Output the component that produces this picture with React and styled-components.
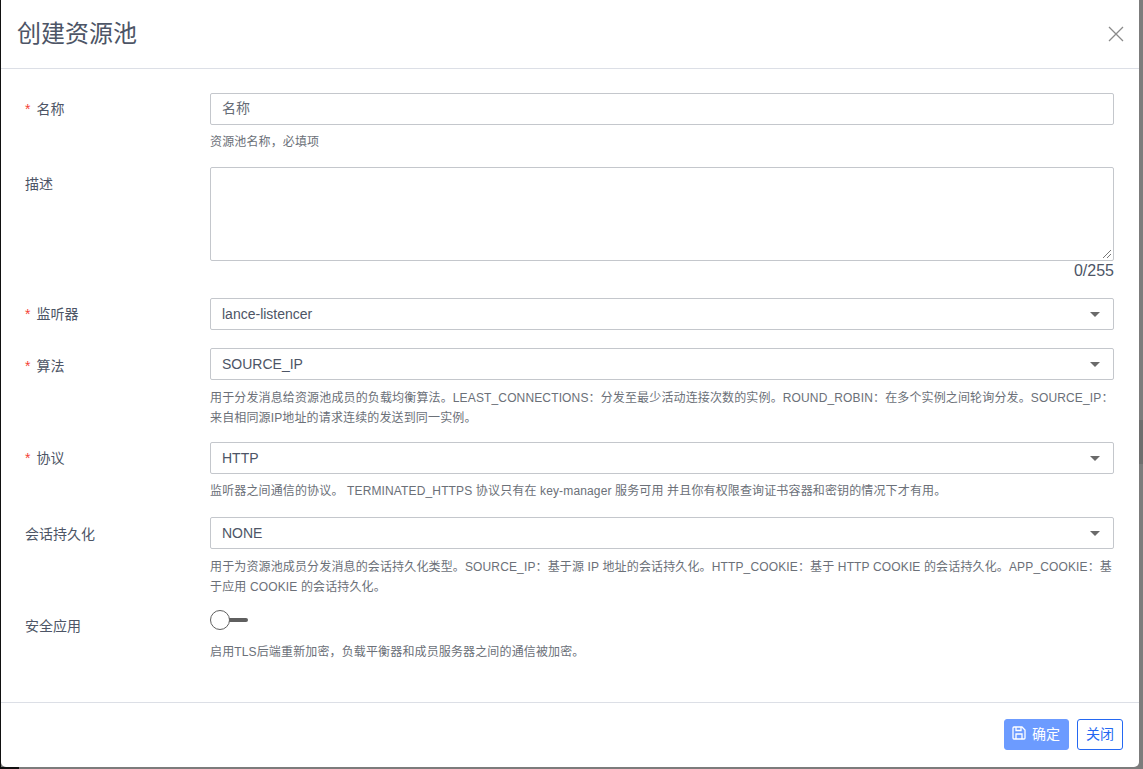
import React from "react";
import styled, { createGlobalStyle } from "styled-components";

const GlobalStyle = createGlobalStyle`
  html, body {
    margin: 0;
    padding: 0;
    height: 100%;
    background: #7a7a7a;
  }
  body {
    font-family: "Liberation Sans", "Noto Sans CJK SC", sans-serif;
    overflow: hidden;
  }
`;

const Backdrop = styled.div`
  width: 1143px;
  height: 769px;
  box-sizing: border-box;
  background:
    linear-gradient(#111, #111) left top / 1px 100% no-repeat,
    linear-gradient(#111, #111) left bottom / 19px 2px no-repeat,
    linear-gradient(#6e6e6e, #6e6e6e) right 420px / 4px 44px no-repeat,
    #7c7c7c;
`;

const Modal = styled.div`
  width: 1138px;
  height: 767px;
  box-sizing: border-box;
  margin-left: 1px;
  background: #fff;
  border-radius: 0 0 5px 5px;
  display: flex;
  flex-direction: column;
`;

const Header = styled.div`
  height: 69px;
  flex: none;
  box-sizing: border-box;
  border-bottom: 1px solid #dcdfe6;
  display: flex;
  align-items: center;
  justify-content: space-between;
  padding: 0 15px 0 16px;
`;

const Title = styled.h4`
  margin: 0 0 6px;
  font-size: 24px;
  font-weight: 400;
  color: #4d5566;
`;

const CloseIcon = styled.button`
  border: none;
  background: none;
  padding: 0;
  display: flex;
  color: #8a8a8a;
`;

const Body = styled.div`
  flex: 1;
  padding: 24px 25px 0 24px;
`;

const Row = styled.div`
  display: grid;
  grid-template-columns: 185px 904px;
  margin-bottom: ${(p) => p.$gap}px;
`;

const Label = styled.label`
  font-size: 14px;
  line-height: 32px;
  padding-top: ${(p) => p.$nudge || 0}px;
  color: #4d5566;
`;

const Star = styled.span`
  color: #f44336;
  margin-right: 6px;
`;

const Control = styled.div`
  min-width: 0;
`;

const Input = styled.div`
  height: 32px;
  box-sizing: border-box;
  border: 1px solid #c4c7cc;
  border-radius: 2px;
  padding: 0 11px;
  font-size: 14px;
  line-height: 29px;
  color: ${(p) => (p.$placeholder ? "#666b75" : "#4d5566")};
`;

const Area = styled.div`
  height: 94px;
  box-sizing: border-box;
  border: 1px solid #c4c7cc;
  border-radius: 2px;
  position: relative;
`;

const Grip = styled.svg`
  position: absolute;
  right: 1px;
  bottom: 1px;
`;

const Counter = styled.div`
  text-align: right;
  font-size: 16px;
  line-height: 20px;
  color: #4d5566;
`;

const Select = styled(Input)`
  display: flex;
  align-items: center;
  justify-content: space-between;
  padding-right: 13px;
  line-height: normal;
`;

const Caret = styled.span`
  width: 0;
  height: 0;
  border-left: 5.5px solid transparent;
  border-right: 5.5px solid transparent;
  border-top: 5.5px solid #6a6a6a;
`;

const Help = styled.div`
  margin-top: ${(p) => p.$top || 7}px;
  font-size: 12px;
  line-height: 20px;
  letter-spacing: 0.14px;
  color: #6b7078;
`;

const Switch = styled.div`
  width: 38px;
  height: 20px;
  position: relative;
  display: flex;
  align-items: center;
`;

const SwitchTrack = styled.span`
  width: 36px;
  height: 4px;
  margin-left: 2px;
  border-radius: 2px;
  background: #5f5f5f;
`;

const SwitchKnob = styled.span`
  position: absolute;
  left: 0;
  top: 0;
  width: 20px;
  height: 20px;
  box-sizing: border-box;
  border: 1px solid #5f5f5f;
  border-radius: 50%;
  background: #fff;
`;

const Footer = styled.div`
  height: 65px;
  flex: none;
  box-sizing: border-box;
  border-top: 1px solid #dcdfe6;
  display: flex;
  justify-content: flex-end;
  align-items: flex-start;
  gap: 8px;
  padding: 16px 16px 0 0;
`;

const Button = styled.button`
  height: 31px;
  box-sizing: border-box;
  border-radius: 3px;
  font-family: inherit;
  font-size: 14px;
  display: flex;
  align-items: center;
  gap: 6px;
  padding: 0 8px 3px ${(p) => (p.$primary ? 7 : 8)}px;
  border: 1px solid ${(p) => (p.$primary ? "#6c9bff" : "#2468f2")};
  background: ${(p) => (p.$primary ? "#6c9bff" : "#fff")};
  color: ${(p) => (p.$primary ? "#fff" : "#2468f2")};
`;

export default function App() {
  return (
    <>
      <GlobalStyle />
      <Backdrop>
        <Modal>
          <Header>
            <Title>创建资源池</Title>
            <CloseIcon aria-label="close">
              <svg width="16" height="16" viewBox="0 0 16 16" fill="none" stroke="currentColor" strokeWidth="1.3">
                <path d="M1 1l14 14M15 1L1 15" />
              </svg>
            </CloseIcon>
          </Header>
          <Body>
            <Row $gap={15}>
              <Label><Star>*</Star>名称</Label>
              <Control>
                <Input $placeholder>名称</Input>
                <Help>资源池名称，必填项</Help>
              </Control>
            </Row>
            <Row $gap={17}>
              <Label $nudge={1}>描述</Label>
              <Control>
                <Area>
                  <Grip width="11" height="11" viewBox="0 0 11 11" stroke="#777" fill="none">
                    <path d="M2 10l8-8M6 10l4-4" />
                  </Grip>
                </Area>
                <Counter>0/255</Counter>
              </Control>
            </Row>
            <Row $gap={18}>
              <Label><Star>*</Star>监听器</Label>
              <Control>
                <Select>lance-listencer<Caret /></Select>
              </Control>
            </Row>
            <Row $gap={14}>
              <Label $nudge={2}><Star>*</Star>算法</Label>
              <Control>
                <Select>SOURCE_IP<Caret /></Select>
                <Help $top={8}>
                  用于分发消息给资源池成员的负载均衡算法。LEAST_CONNECTIONS：分发至最少活动连接次数的实例。ROUND_ROBIN：在多个实例之间轮询分发。SOURCE_IP：来自相同源IP地址的请求连续的发送到同一实例。
                </Help>
              </Control>
            </Row>
            <Row $gap={16}>
              <Label><Star>*</Star>协议</Label>
              <Control>
                <Select>HTTP<Caret /></Select>
                <Help>
                  监听器之间通信的协议。 TERMINATED_HTTPS 协议只有在 key-manager 服务可用 并且你有权限查询证书容器和密钥的情况下才有用。
                </Help>
              </Control>
            </Row>
            <Row $gap={13}>
              <Label $nudge={1}>会话持久化</Label>
              <Control>
                <Select>NONE<Caret /></Select>
                <Help $top={8}>
                  用于为资源池成员分发消息的会话持久化类型。SOURCE_IP：基于源 IP 地址的会话持久化。HTTP_COOKIE：基于 HTTP COOKIE 的会话持久化。APP_COOKIE：基于应用 COOKIE 的会话持久化。
                </Help>
              </Control>
            </Row>
            <Row $gap={0}>
              <Label>安全应用</Label>
              <Control>
                <Switch>
                  <SwitchTrack />
                  <SwitchKnob />
                </Switch>
                <Help $top={12}>启用TLS后端重新加密，负载平衡器和成员服务器之间的通信被加密。</Help>
              </Control>
            </Row>
          </Body>
          <Footer>
            <Button $primary>
              <svg width="14" height="14" viewBox="0 0 14 14" fill="none" stroke="currentColor" strokeWidth="1.3">
                <path d="M1 2a1 1 0 0 1 1-1h8l3 3v8a1 1 0 0 1-1 1H2a1 1 0 0 1-1-1z" />
                <path d="M4 1v3.5h5V1M4 13V8h6v5" />
              </svg>
              确定
            </Button>
            <Button>关闭</Button>
          </Footer>
        </Modal>
      </Backdrop>
    </>
  );
}
